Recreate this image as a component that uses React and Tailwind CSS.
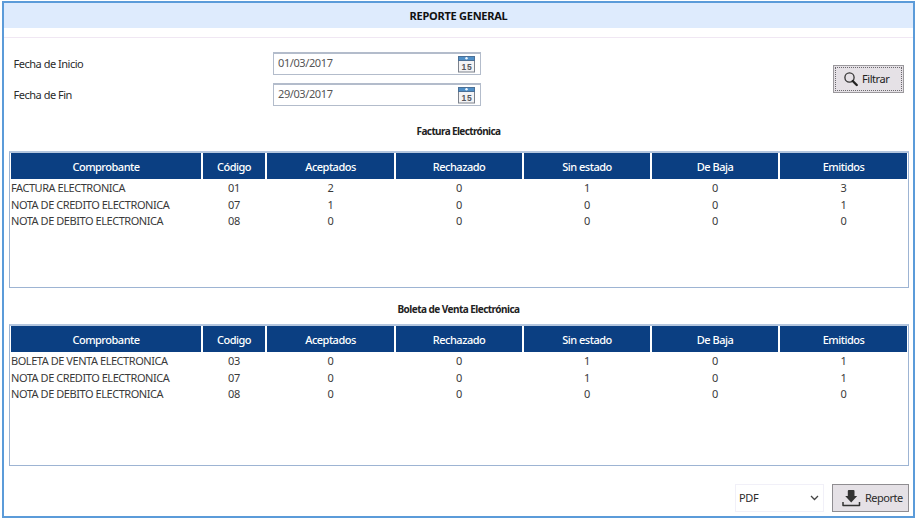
const COLUMNS = "grid grid-cols-[190px_62px_127px_126px_126px_126px_127px] gap-x-[2px]";

function CalendarIcon() {
  return (
    <svg width="17" height="17" viewBox="0 0 17 17" className="shrink-0">
      <rect x="0.5" y="0.5" width="16" height="15.5" fill="#f3f3f5" stroke="#7d828c" />
      <rect x="0" y="0" width="17" height="5" fill="#4a6f96" />
      <rect x="1" y="1" width="15" height="3" fill="#4f8fc7" />
      <circle cx="8.5" cy="2.2" r="1.2" fill="#eef6ff" />
      <text x="8.9" y="13.7" textAnchor="middle" fontFamily="Liberation Sans, sans-serif" fontWeight="700" fontSize="8.5" letterSpacing="0.7" fill="#55575d">15</text>
    </svg>
  );
}

function DateField({ label, value }) {
  return (
    <div className="flex h-[23px] items-center">
      <label className="w-[260px] pt-[2px] pl-[0.5px] text-[11px] tracking-[-0.48px] text-[#2b2b2b]">{label}</label>
      <div className="flex h-[23px] w-[208px] items-center justify-between border border-t-2 border-[#b3bccb] bg-white pr-[5px] pl-1">
        <span className="-mt-[2px] text-[11px] tracking-[-0.4px] text-[#555]">{value}</span>
        <CalendarIcon />
      </div>
    </div>
  );
}

function ReportTable({ headers, rows, className }) {
  return (
    <div className={`border border-[#9db4d3] border-t-2 border-t-[#b4c6de] px-px ${className}`}>
      <div className={`${COLUMNS} h-[26px] text-[11px] tracking-[-0.5px] text-white`}>
        {headers.map((h) => (
          <div key={h} className="flex items-center justify-center bg-[#0b3f82] pt-[2px] font-medium">
            {h}
          </div>
        ))}
      </div>
      <div className="pt-px">
        {rows.map(([name, ...cells]) => (
          <div key={name} className={`${COLUMNS} h-[16.5px] items-center text-[11px] leading-[16px] text-[#3a3a3a]`}>
            <div className="whitespace-nowrap tracking-[-0.45px]">{name}</div>
            {cells.map((c, i) => (
              <div key={i} className="text-center tracking-[-0.3px]">{c}</div>
            ))}
          </div>
        ))}
      </div>
    </div>
  );
}

const TAIL = ["Aceptados", "Rechazado", "Sin estado", "De Baja", "Emitidos"];

export default function App() {
  return (
    <div className="h-[520px] w-[917px] overflow-hidden bg-white pt-px pl-[2px] font-['Noto_Sans',sans-serif]">
      <div className="flex h-[517px] w-[913px] flex-col border-2 border-[#5b9bd9] bg-white">
        <h1 className="flex h-[25px] shrink-0 items-center justify-center bg-[#deebfd] pt-[2px] text-[11px] font-bold tracking-[-0.25px] text-[#111]">
          REPORTE GENERAL
        </h1>
        <div className="h-[10px] shrink-0 border-b border-[#f0e7f3]" />
        <div className="flex h-[83px] shrink-0 items-start justify-between pt-[14px] pr-[9px] pl-[9px]">
          <div className="flex flex-col gap-2">
            <DateField label="Fecha de Inicio" value="01/03/2017" />
            <DateField label="Fecha de Fin" value="29/03/2017" />
          </div>
          <button className="mt-[13px] flex h-7 w-[71px] items-center border border-[#9b999d] bg-[#e5e1e6] p-px">
            <span className="flex h-full w-full items-center gap-[4px] border border-dotted border-[#6a686c] pl-[8px] text-[11px] tracking-[-0.45px] text-[#222]">
              <svg width="14" height="15" viewBox="0 0 14 15" fill="none" className="shrink-0">
                <circle cx="5.5" cy="5.5" r="4.6" stroke="#333" strokeWidth="1.3" />
                <path d="M8.7 9 L12.7 13" stroke="#222" strokeWidth="2.4" strokeLinecap="round" />
              </svg>
              <span className="pt-px">Filtrar</span>
            </span>
          </button>
        </div>
        <h2 className="flex h-[30px] shrink-0 items-center justify-center pb-[9px] text-[10px] font-bold tracking-[-0.62px] text-[#222]">
          Factura Electrónica
        </h2>
        <ReportTable
          className="ml-[5px] h-[137px] w-[900px] shrink-0"
          headers={["Comprobante", "Código", ...TAIL]}
          rows={[
            ["FACTURA ELECTRONICA", "01", 2, 0, 1, 0, 3],
            ["NOTA DE CREDITO ELECTRONICA", "07", 1, 0, 0, 0, 1],
            ["NOTA DE DEBITO ELECTRONICA", "08", 0, 0, 0, 0, 0],
          ]}
        />
        <h2 className="flex h-[36px] shrink-0 items-center justify-center pt-[7px] text-[10px] font-bold tracking-[-0.54px] text-[#222]">
          Boleta de Venta Electrónica
        </h2>
        <ReportTable
          className="ml-[5px] h-[142px] w-[900px] shrink-0"
          headers={["Comprobante", "Codigo", ...TAIL]}
          rows={[
            ["BOLETA DE VENTA ELECTRONICA", "03", 0, 0, 1, 0, 1],
            ["NOTA DE CREDITO ELECTRONICA", "07", 0, 0, 1, 0, 1],
            ["NOTA DE DEBITO ELECTRONICA", "08", 0, 0, 0, 0, 0],
          ]}
        />
        <div className="mt-[18px] flex shrink-0 justify-end gap-2 pr-1 text-[11px] text-[#2b2b2b]">
          <div className="flex h-7 w-[89px] items-center justify-between border border-[#f1f0f8] pr-[4px] pl-[3px] tracking-[-0.4px]">
            PDF
            <svg width="9" height="6" viewBox="0 0 9 6" fill="none">
              <path d="M1 1 L4.5 4.5 L8 1" stroke="#444" strokeWidth="1.3" />
            </svg>
          </div>
          <button className="flex h-7 w-[77px] items-center gap-[4px] border border-[#8f8d91] bg-[#e5e1e6] pl-[9px] tracking-[-0.5px]">
            <svg width="19" height="17" viewBox="0 0 19 17" className="shrink-0">
              <path d="M5.8 1 Q5.8 0 6.8 0 H11.5 Q12.5 0 12.5 1 V6 H15.2 L9.2 12.4 L3.2 6 H5.8 Z" fill="#333" />
              <path d="M1 12 V15.6 H17.5 V12" fill="none" stroke="#333" strokeWidth="1.5" strokeLinejoin="round" />
            </svg>
            <span className="pt-px">Reporte</span>
          </button>
        </div>
      </div>
    </div>
  );
}
